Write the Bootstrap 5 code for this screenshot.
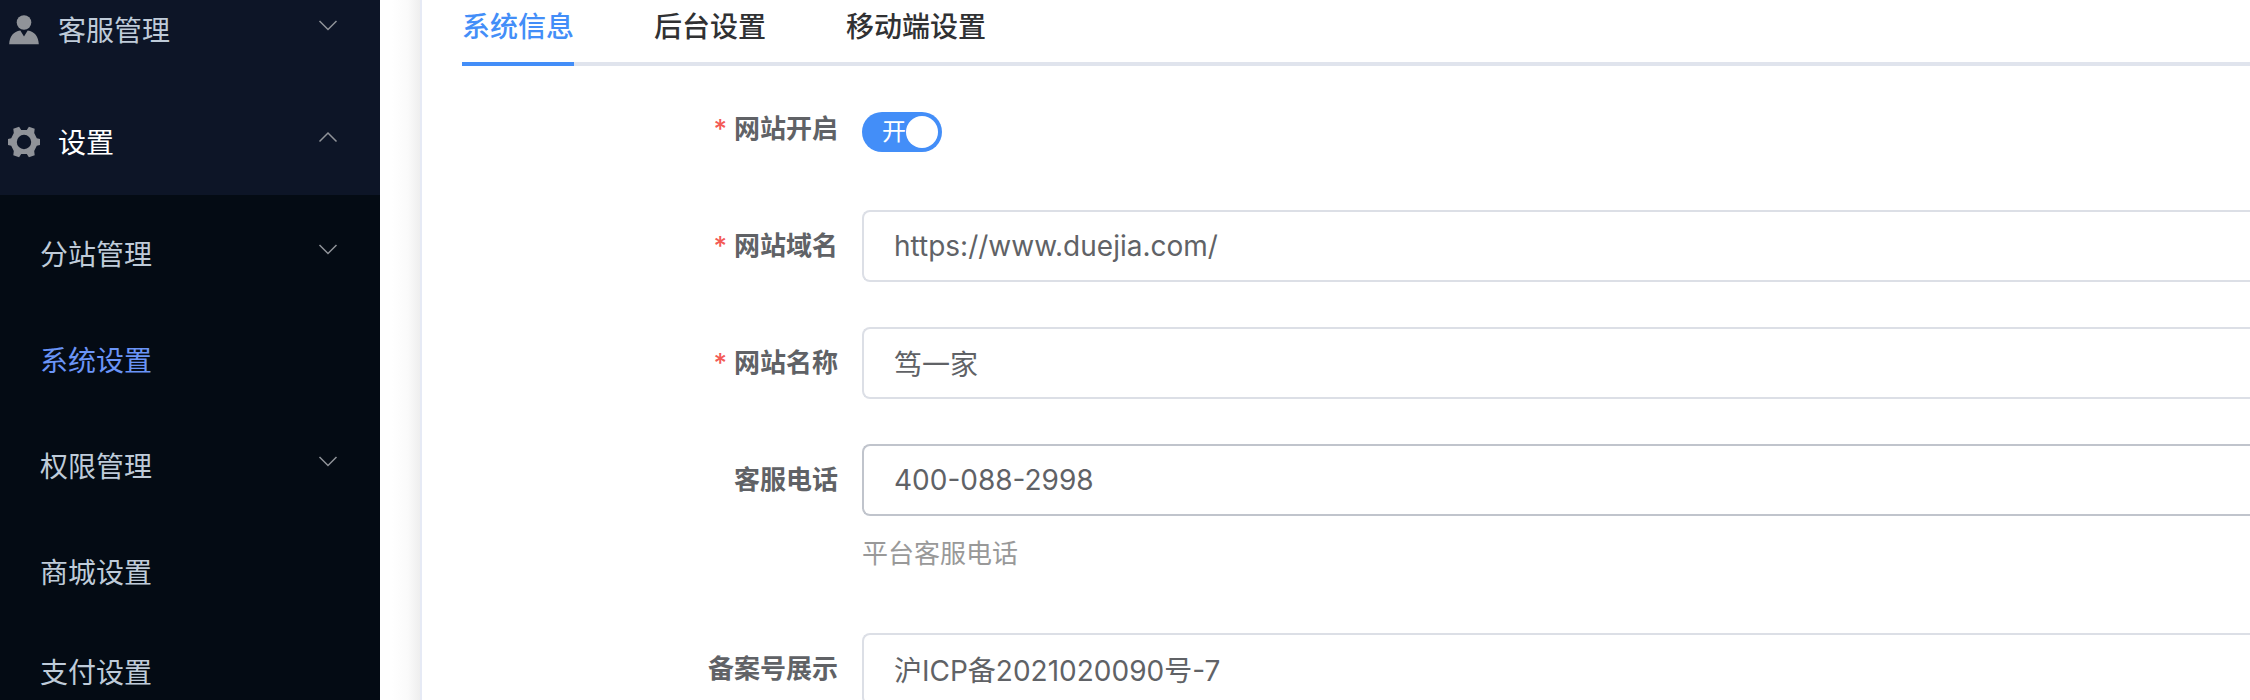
<!DOCTYPE html>
<html lang="zh-CN">
<head>
<meta charset="utf-8">
<meta name="viewport" content="width=device-width, initial-scale=1">
<title>系统设置</title>
<link href="https://cdn.jsdelivr.net/npm/bootstrap@5.3.0/dist/css/bootstrap.min.css" rel="stylesheet">
<style>
  body { font-family: Inter, "Noto Sans CJK SC", sans-serif; font-size: 28px; line-height: 40px; color: #606266; background: #fff; }

  /* sidebar, scrolled part-way down its list */
  .side-bar { width: 380px; background: #0d1527; }
  .side-list { margin-top: -29px; }
  .side-link { height: 112px; padding: 8px 42px 0 40px; font-size: 28px; line-height: 40px; color: #bfcbd9; }
  .side-link.top-level { padding-left: 8px; }
  .side-link.leaf { height: 100px; }
  .side-link.opened { color: #fff; }
  .side-link.current { color: #6a94f7; }
  .side-sub { background: #040b14; }
  .side-icon { width: 32px; height: 32px; margin: 0 18px 2px 0; fill: #909399; }
  .side-arrow { width: 20px; height: 12px; margin-bottom: 12px; fill: none; stroke: #909399; stroke-width: 1.5; }

  /* page panel */
  .gutter { width: 40px; background: linear-gradient(to right, #fff 30%, #fafafa 70%, #eee); }
  .panel { border-left: 2px solid #e6eaf5; padding: 6px 0 0 40px; }
  .tab-strip { box-shadow: inset 0 -4px #e0e4ed; gap: 80px; }
  .tab-strip .nav-link { height: 60px; padding: 3px 0 17px; border: 0; border-bottom: 4px solid transparent; border-radius: 0; background: transparent; color: #303133; font-weight: 500; line-height: 36px; }
  .tab-strip .nav-link.active { color: #438ef8; border-bottom-color: #438ef8; }

  .site-form { padding-top: 27px; }
  .form-line { margin-bottom: 45px; }
  .line-label { width: 400px; padding-right: 24px; font-size: 26px; line-height: 72px; font-weight: 700; }
  .needed::before { content: "*"; color: #f35a55; margin-right: 7px; font-weight: 500; }
  .line-input { height: 72px; padding: 0 30px; border: 2px solid #dcdfe6; border-radius: 8px; font-size: 28px; color: #606266; }
  .line-input.hovered { border-color: #c0c4cc; }
  .hint { font-size: 26px; line-height: 36px; margin: 20px 0 16px; color: #999; }

  .toggle { width: 80px; height: 40px; margin-top: 6px; }
  .toggle .form-check-input { width: 80px; height: 40px; margin: 0; border: 0; box-shadow: none; background-size: 40px 40px; background-color: #438ef8;
    background-image: url("data:image/svg+xml,%3csvg xmlns='http://www.w3.org/2000/svg' viewBox='0 0 40 40'%3e%3ccircle cx='20' cy='20' r='16' fill='%23fff'/%3e%3c/svg%3e"); background-position: right center; }
  .toggle-text { left: 20px; top: 0; font-size: 24px; line-height: 40px; color: #fff; pointer-events: none; }
</style>
</head>
<body class="vh-100 overflow-hidden">
<svg class="d-none">
  <symbol id="arrow-down" viewBox="0 0 20 12"><path d="M1.500 2 10 10.500 18.500 2"/></symbol>
  <symbol id="arrow-up" viewBox="0 0 20 12"><path d="M1.500 10.500 10 2 18.500 10.500"/></symbol>
</svg>
<div class="d-flex vh-100">
  <nav class="side-bar flex-shrink-0 overflow-hidden" aria-label="主菜单">
    <div class="side-list nav flex-column flex-nowrap">
      <a href="#" class="side-link top-level d-flex align-items-center text-decoration-none">
        <svg class="side-icon" viewBox="0 0 32 32"><circle cx="16" cy="8.500" r="7.300"/><path d="M1.200 30.300C1.500 22.500 5.500 17.500 12.300 16.500L16 22.500l3.700-6C26.500 17.500 30.500 22.500 30.800 30.300z"/></svg>
        <span>客服管理</span>
        <svg class="side-arrow ms-auto"><use href="#arrow-down"/></svg>
      </a>
      <a href="#" class="side-link top-level opened d-flex align-items-center text-decoration-none">
        <svg class="side-icon" viewBox="0 0 32 32"><path fill-rule="evenodd" d="M5.300 2.800 11.100.8 13.200 4h5.600L20.900.8l5.800 2-.5 4.200 2.600 5.200L32 13v6l-3.200.800-2.600 5.200.5 4.200-5.800 2-2.100-3.200h-5.600l-2.100 3.200-5.800-2 .5-4.200L3.200 19.800 0 19v-6l3.200-.8L5.800 7zM16 8.800a7.200 7.200 0 1 0 0 14.400 7.200 7.200 0 0 0 0-14.400z"/></svg>
        <span>设置</span>
        <svg class="side-arrow ms-auto"><use href="#arrow-up"/></svg>
      </a>
      <div class="side-sub">
        <a href="#" class="side-link d-flex align-items-center text-decoration-none"><span>分站管理</span><svg class="side-arrow ms-auto"><use href="#arrow-down"/></svg></a>
        <a href="#" class="side-link leaf current d-flex align-items-center text-decoration-none" aria-current="page">系统设置</a>
        <a href="#" class="side-link d-flex align-items-center text-decoration-none"><span>权限管理</span><svg class="side-arrow ms-auto"><use href="#arrow-down"/></svg></a>
        <a href="#" class="side-link leaf d-flex align-items-center text-decoration-none">商城设置</a>
        <a href="#" class="side-link leaf d-flex align-items-center text-decoration-none">支付设置</a>
      </div>
    </div>
  </nav>
  <div class="gutter flex-shrink-0"></div>
  <main class="panel flex-grow-1 overflow-hidden">
    <div class="tab-strip nav flex-nowrap" role="tablist">
      <button type="button" class="nav-link active" role="tab" aria-selected="true">系统信息</button>
      <button type="button" class="nav-link" role="tab" aria-selected="false">后台设置</button>
      <button type="button" class="nav-link" role="tab" aria-selected="false">移动端设置</button>
    </div>
    <form class="site-form">
      <div class="form-line d-flex">
        <label class="line-label needed flex-shrink-0 text-end" for="site-on">网站开启</label>
        <div class="toggle form-switch p-0 position-relative align-self-center">
          <input class="form-check-input float-none d-block" type="checkbox" role="switch" id="site-on" checked>
          <span class="toggle-text position-absolute">开</span>
        </div>
      </div>
      <div class="form-line d-flex">
        <label class="line-label needed flex-shrink-0 text-end" for="site-url">网站域名</label>
        <input class="line-input form-control border-end-0 rounded-end-0" type="text" id="site-url" value="https://www.duejia.com/">
      </div>
      <div class="form-line d-flex">
        <label class="line-label needed flex-shrink-0 text-end" for="site-name">网站名称</label>
        <input class="line-input form-control border-end-0 rounded-end-0" type="text" id="site-name" value="笃一家">
      </div>
      <div class="form-line d-flex">
        <label class="line-label flex-shrink-0 text-end" for="site-tel">客服电话</label>
        <div class="flex-grow-1">
          <input class="line-input hovered form-control border-end-0 rounded-end-0" type="text" id="site-tel" value="400-088-2998" aria-describedby="tel-hint">
          <div class="hint" id="tel-hint">平台客服电话</div>
        </div>
      </div>
      <div class="form-line d-flex">
        <label class="line-label flex-shrink-0 text-end" for="site-icp">备案号展示</label>
        <input class="line-input form-control border-end-0 rounded-end-0" type="text" id="site-icp" value="沪ICP备2021020090号-7">
      </div>
    </form>
  </main>
</div>
<script src="https://cdn.jsdelivr.net/npm/bootstrap@5.3.0/dist/js/bootstrap.bundle.min.js"></script>
</body>
</html>
